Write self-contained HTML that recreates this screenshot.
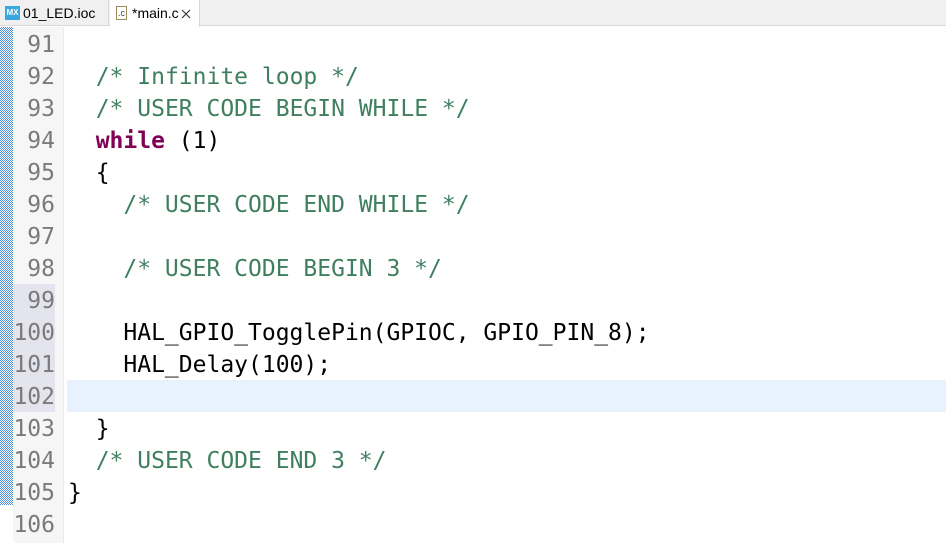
<!DOCTYPE html>
<html><head><meta charset="utf-8"><style>
*{margin:0;padding:0;box-sizing:border-box}
body{width:946px;height:543px;overflow:hidden;background:#fff;font-family:"DejaVu Sans Mono","Liberation Mono",monospace;position:relative}
.tabs{position:absolute;left:0;top:0;width:946px;height:26px;background:#f0f0f0;border-bottom:1px solid #d8d8d8}
.tab{position:absolute;top:0;height:26px;font:14px "Liberation Sans",sans-serif;color:#000;line-height:26px}
.t1{left:0;width:109px;border-right:1px solid #d8d8d8}
.t2{left:110px;width:90px;background:#fff;border-right:1px solid #d8d8d8;height:27px}
.mx{position:absolute;left:5px;top:6px;width:15px;height:14px;background:#3aa6e0;color:#fff;font:bold 8px "Liberation Sans",sans-serif;line-height:14px;text-align:center}
.cf{position:absolute;left:6px;top:6px;width:11px;height:14px;border:1px solid #9a8a5a;background:#fff;font:9px "Liberation Sans";line-height:12px;color:#345;text-align:center}
.strip{position:absolute;left:0;top:27px;width:13px;height:478px;background-color:#fff;background-image:repeating-conic-gradient(#2e7ad8 0 25%,#fff 0 50%);background-size:2px 2px;opacity:.85}
.gut{position:absolute;left:13px;top:27px;width:51px;height:516px;background:#f6f6f6;border-right:1px solid #eaeaea}
.ghl{position:absolute;left:13px;top:284px;width:42px;height:128px;background:#e4e4ee}
.chl{position:absolute;left:67px;top:380px;width:879px;height:32px;background:#e8f2fe}
.ln{position:absolute;left:13px;width:42px;text-align:right;color:#7a7a7a;font-size:23px;line-height:32px;height:32px;top:1px}
.cd{position:absolute;left:68px;font-size:23px;line-height:32px;height:32px;white-space:pre;color:#000}
.c{color:#3f7f5f}.k{color:#7f0055;font-weight:bold}
</style></head><body>
<div class="tabs">
<div class="tab t1"><span class="mx">MX</span><span style="position:absolute;left:23px">01_LED.ioc</span></div>
<div class="tab t2"><span class="cf">.c</span><span style="position:absolute;left:22px">*main.c</span>
<svg style="position:absolute;left:71px;top:9px" width="10" height="10"><path d="M1 1L9 9M9 1L1 9" stroke="#333" stroke-width="1.1"/></svg></div>
</div>
<div class="gut"></div><div class="strip"></div><div class="ghl"></div><div class="chl"></div>
<div class="ln" style="top:29px">91</div><div class="ln" style="top:61px">92</div><div class="ln" style="top:93px">93</div><div class="ln" style="top:125px">94</div><div class="ln" style="top:157px">95</div><div class="ln" style="top:189px">96</div><div class="ln" style="top:221px">97</div><div class="ln" style="top:253px">98</div><div class="ln" style="top:285px">99</div><div class="ln" style="top:317px">100</div><div class="ln" style="top:349px">101</div><div class="ln" style="top:381px">102</div><div class="ln" style="top:413px">103</div><div class="ln" style="top:445px">104</div><div class="ln" style="top:477px">105</div><div class="ln" style="top:509px">106</div>
<div class="cd" style="top:61px">  <span class="c">/* Infinite loop */</span></div>
<div class="cd" style="top:93px">  <span class="c">/* USER CODE BEGIN WHILE */</span></div>
<div class="cd" style="top:125px">  <span class="k">while</span> (1)</div>
<div class="cd" style="top:157px">  {</div>
<div class="cd" style="top:189px">    <span class="c">/* USER CODE END WHILE */</span></div>
<div class="cd" style="top:253px">    <span class="c">/* USER CODE BEGIN 3 */</span></div>
<div class="cd" style="top:317px">    HAL_GPIO_TogglePin(GPIOC, GPIO_PIN_8);</div>
<div class="cd" style="top:349px">    HAL_Delay(100);</div>
<div class="cd" style="top:413px">  }</div>
<div class="cd" style="top:445px">  <span class="c">/* USER CODE END 3 */</span></div>
<div class="cd" style="top:477px">}</div>
</body></html>
